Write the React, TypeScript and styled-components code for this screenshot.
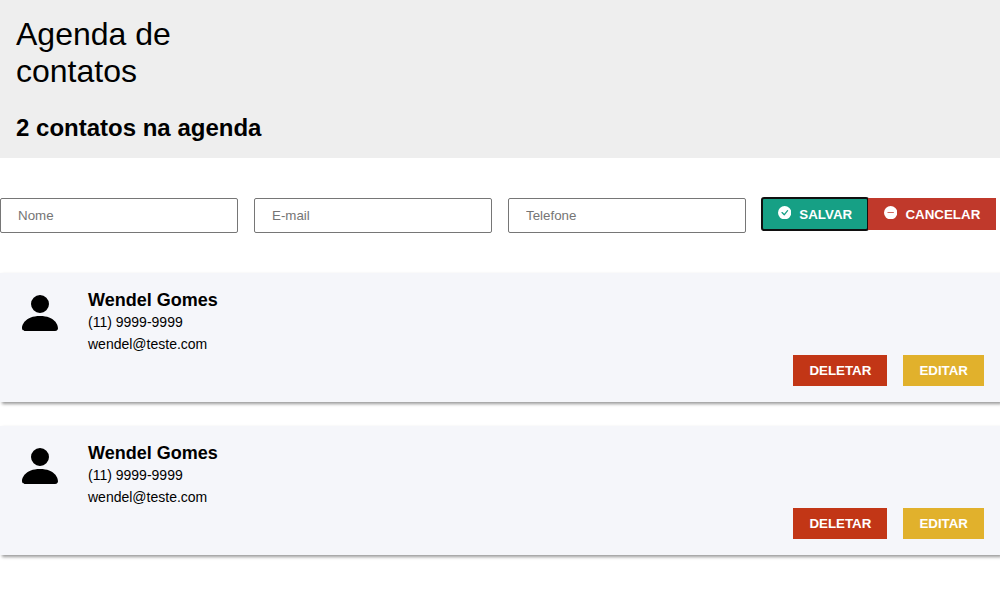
import React from "react";
import styled, { createGlobalStyle } from "styled-components";
import { BsCheckCircleFill, BsDashCircleFill, BsPersonFill } from "react-icons/bs";

const GlobalStyle = createGlobalStyle`
  * {
    box-sizing: border-box;
    margin: 0;
    padding: 0;
  }
  body, input, button {
    font-family: Arial, "Liberation Sans", sans-serif;
  }
  body {
    background: #fff;
    color: #000;
  }
`;

const Header = styled.header`
  display: flex;
  flex-direction: column;
  gap: 24px;
  padding: 16px;
  background: #eee;
`;

const Title = styled.h1`
  max-width: 200px;
  font-size: 32px;
  font-weight: 400;
  line-height: 37px;
`;

const Subtitle = styled.h2`
  font-size: 24px;
  font-weight: 700;
  line-height: 28px;
`;

const ContactForm = styled.form`
  display: grid;
  grid-template-columns: repeat(4, minmax(0, 1fr));
  gap: 16px;
  margin: 40px 0;
`;

const Field = styled.input`
  width: 100%;
  height: 35px;
  padding: 8px 17px;
  border: 1px solid #767676;
  border-radius: 2px;
  background: #fff;
  &::placeholder {
    color: #757575;
  }
`;

const FormActions = styled.div`
  display: flex;
  align-items: flex-start;
`;

const Button = styled.button<{ $color: string; $focused?: boolean }>`
  padding: 8px 16px;
  border: none;
  border-radius: ${({ $focused }) => ($focused ? "2px" : "0")};
  outline: ${({ $focused }) => ($focused ? "2px solid #101010" : "none")};
  outline-offset: -1px;
  background: ${({ $color }) => $color};
  color: #fff;
  font-weight: 700;
  line-height: 15px;
  white-space: nowrap;
  cursor: pointer;
  svg {
    margin-right: 8px;
  }
`;

const ContactList = styled.ul`
  display: flex;
  flex-direction: column;
  gap: 24px;
  padding-bottom: 24px;
  list-style: none;
`;

const Card = styled.li`
  padding: 16px;
  background: #f5f6fa;
  box-shadow: 2px 2px 3px rgba(0, 0, 0, 0.4);
`;

const Person = styled.div`
  display: flex;
  gap: 24px;
`;

const Name = styled.h3`
  font-size: 18px;
  line-height: 22px;
`;

const Detail = styled.p`
  font-size: 14px;
  line-height: 22px;
`;

const CardActions = styled.div`
  display: flex;
  justify-content: flex-end;
  gap: 16px;
`;

const contacts = [
  { id: 1, name: "Wendel Gomes", phone: "(11) 9999-9999", email: "wendel@teste.com" },
  { id: 2, name: "Wendel Gomes", phone: "(11) 9999-9999", email: "wendel@teste.com" },
];

export default function App() {
  return (
    <>
      <GlobalStyle />
      <Header>
        <Title>Agenda de contatos</Title>
        <Subtitle>{contacts.length} contatos na agenda</Subtitle>
      </Header>
      <main>
        <ContactForm onSubmit={(e) => e.preventDefault()}>
          <Field type="text" placeholder="Nome" aria-label="Nome" />
          <Field type="email" placeholder="E-mail" aria-label="E-mail" />
          <Field type="tel" placeholder="Telefone" aria-label="Telefone" />
          <FormActions>
            <Button type="submit" $color="#16a085" $focused>
              <BsCheckCircleFill aria-hidden />
              SALVAR
            </Button>
            <Button type="button" $color="#c0392b">
              <BsDashCircleFill aria-hidden />
              CANCELAR
            </Button>
          </FormActions>
        </ContactForm>
        <ContactList>
          {contacts.map((contact) => (
            <Card key={contact.id}>
              <Person>
                <BsPersonFill size={48} aria-hidden />
                <div>
                  <Name>{contact.name}</Name>
                  <Detail>{contact.phone}</Detail>
                  <Detail>{contact.email}</Detail>
                </div>
              </Person>
              <CardActions>
                <Button type="button" $color="#c23616">DELETAR</Button>
                <Button type="button" $color="#e1b12c">EDITAR</Button>
              </CardActions>
            </Card>
          ))}
        </ContactList>
      </main>
    </>
  );
}
